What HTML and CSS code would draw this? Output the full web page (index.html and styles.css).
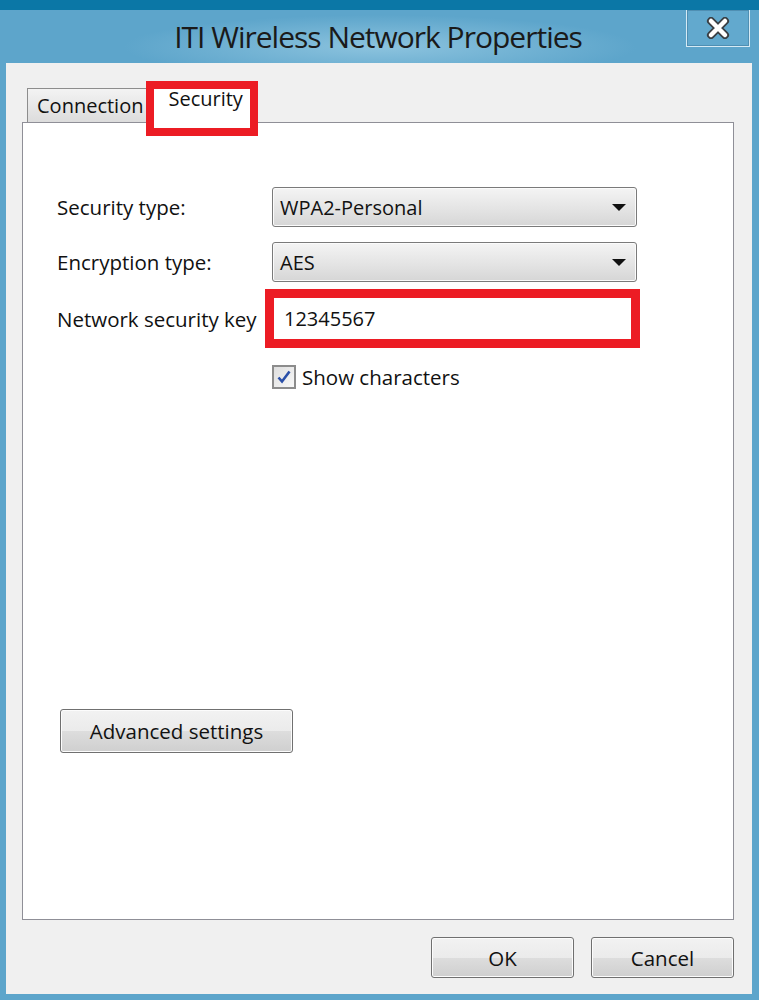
FILE: index.html
```html
<!DOCTYPE html>
<html lang="en">

<head>
    <meta charset="UTF-8">
    <meta name="viewport" content="width=device-width, initial-scale=1.0">
    <title>ITI Wireless Network Properties</title>
    <link rel="stylesheet" href="styles.css">
</head>

<body>
    <div class="window">
        <div class="titlebar">
            <div class="title">ITI Wireless Network Properties</div>
            <div class="close">
                <svg width="30" height="22" viewBox="0 0 30 22">
                    <path d="M8 4 L22 18 M22 4 L8 18" stroke="#3a3f44" stroke-width="8" stroke-linecap="round" />
                    <path d="M8 4 L22 18 M22 4 L8 18" stroke="#ffffff" stroke-width="4.5" stroke-linecap="round" />
                </svg>
            </div>
        </div>

        <div class="client">
            <div class="tabs">
                <div class="tab">Connection</div>
                <div class="tab selected">Security</div>
            </div>

            <div class="panel">
                <div class="row">
                    <div class="label">Security type:</div>
                    <div class="select">
                        <span>WPA2-Personal</span>
                        <span class="arrow"></span>
                    </div>
                </div>
                <div class="row">
                    <div class="label">Encryption type:</div>
                    <div class="select">
                        <span>AES</span>
                        <span class="arrow"></span>
                    </div>
                </div>
                <div class="row key-row">
                    <div class="label">Network security key</div>
                    <div class="keybox">12345567</div>
                </div>
                <div class="check-row">
                    <div class="checkbox">
                        <svg width="16" height="16" viewBox="0 0 16 16">
                            <path d="M2.5 8.5 L6 12.5 L13.5 2.5" fill="none" stroke="#2a4fa8" stroke-width="2.6" />
                        </svg>
                    </div>
                    <span>Show characters</span>
                </div>

                <div class="button advanced">Advanced settings</div>
            </div>

            <div class="footer">
                <div class="button">OK</div>
                <div class="button">Cancel</div>
            </div>
        </div>
    </div>
</body>

</html>
```

FILE: styles.css
```css
body {
    margin: 0;
    background-color: #0b77a6;
    font-family: "Open Sans", "Noto Sans", sans-serif;
    color: #111111;
}

.window {
    margin-top: 10px;
    height: 990px;
    padding: 0 7px 6px 6px;
    background: radial-gradient(ellipse 320px 40px at 380px 37px, #8cc3de, #5da5cb 80%);
    box-sizing: border-box;
    display: flex;
    flex-direction: column;
}

.titlebar {
    height: 53px;
    display: flex;
    align-items: flex-start;
}

.title {
    flex: 1;
    text-align: center;
    font-size: 30px;
    letter-spacing: -1px;
    line-height: 54px;
    color: #1a1a1a;
    padding-left: 64px;
}

.close {
    width: 62px;
    height: 36px;
    margin-right: 2px;
    border: 1px solid #d6ebf5;
    border-top: none;
    background-color: #62a9ce;
    box-shadow: inset 0 0 0 1px #4f8fb3;
    display: flex;
    align-items: center;
    justify-content: center;
}

.client {
    flex: 1;
    background-color: #f0f0f0;
    padding: 21px 18px 0 16px;
    display: flex;
    flex-direction: column;
}

.tabs {
    display: flex;
    padding-left: 5px;
    height: 38px;
    align-items: flex-end;
}

.tab {
    height: 34px;
    box-sizing: border-box;
    padding: 0 4px 0 9px;
    font-size: 20px;
    line-height: 34px;
    border: 1px solid #8d8d8d;
    border-bottom: none;
    background: linear-gradient(#f3f3f3, #dcdcdc);
}

.tab.selected {
    height: 41px;
    margin-bottom: -1px;
    padding: 0 13px 0 20px;
    line-height: 32px;
    background: #ffffff;
    border-left: none;
    position: relative;
}

.tab.selected::after {
    content: "";
    position: absolute;
    left: -2px;
    top: -2px;
    right: -2px;
    bottom: -13px;
    border: 8px solid #ec1c24;
}

.panel {
    height: 798px;
    box-sizing: border-box;
    background-color: #ffffff;
    border: 1px solid #8f8f97;
    padding: 64px 0 0 34px;
    display: flex;
    flex-direction: column;
}

.row {
    display: flex;
    align-items: center;
    margin-bottom: 15px;
}

.label {
    width: 215px;
    font-size: 20.5px;
}

.select {
    width: 365px;
    height: 40px;
    box-sizing: border-box;
    border: 1px solid #7a7a7a;
    border-radius: 3px;
    background: linear-gradient(#f4f4f4, #e4e4e4 55%, #d6d6d6);
    box-shadow: inset 0 0 0 1px #fbfbfb;
    display: flex;
    align-items: center;
    justify-content: space-between;
    padding: 0 10px 0 7px;
    font-size: 20px;
}

.arrow {
    width: 0;
    height: 0;
    border-left: 7px solid transparent;
    border-right: 7px solid transparent;
    border-top: 7px solid #111111;
}

.key-row {
    margin-top: -8px;
}

.key-row .label {
    width: 208px;
}

.keybox {
    width: 375px;
    height: 59px;
    box-sizing: border-box;
    border: 9px solid #ec1c24;
    background-color: #ffffff;
    padding-left: 10px;
    font-size: 20px;
    line-height: 41px;
}

.check-row {
    display: flex;
    align-items: center;
    margin-left: 215px;
    font-size: 20.5px;
}

.checkbox {
    width: 24px;
    height: 24px;
    box-sizing: border-box;
    border: 2px solid #8c8c8c;
    background: linear-gradient(135deg, #dedede, #f8f8f8);
    display: flex;
    align-items: center;
    justify-content: center;
    margin-right: 6px;
}

.button {
    height: 42px;
    box-sizing: border-box;
    border: 1px solid #707070;
    border-radius: 3px;
    background: linear-gradient(#f2f2f2, #ebebeb 50%, #dddddd 51%, #cfcfcf);
    box-shadow: inset 0 0 0 1px #fcfcfc;
    text-align: center;
    font-size: 20.5px;
    line-height: 40px;
}

.advanced {
    width: 233px;
    height: 44px;
    line-height: 42px;
    margin-top: 318px;
    margin-left: 3px;
}

.footer {
    display: flex;
    justify-content: flex-end;
    gap: 17px;
    padding-top: 17px;
}

.footer .button {
    width: 143px;
    height: 41px;
}
```
